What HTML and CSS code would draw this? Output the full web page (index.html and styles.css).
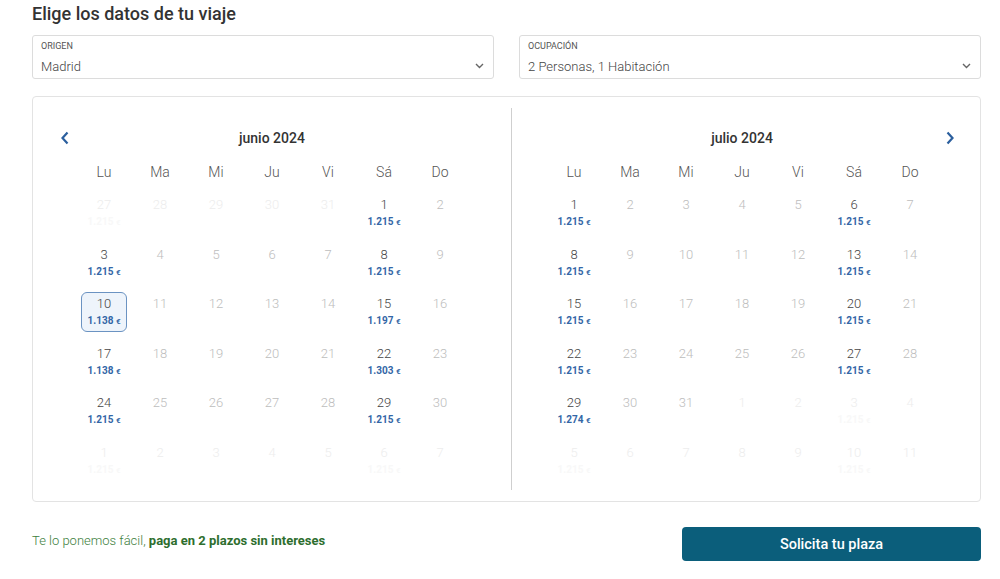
FILE: index.html
```html
<!DOCTYPE html>
<html lang="es">
<head>
  <meta charset="UTF-8">
  <title>Elige los datos de tu viaje</title>
  <link rel="stylesheet" href="styles.css">
</head>
<body>

  <div class="page">
    <h1>Elige los datos de tu viaje</h1>

    <div class="selects">
      <div class="select">
        <span class="select-label">ORIGEN</span>
        <span class="select-value">Madrid</span>
        <svg class="chevron" width="9" height="6" viewBox="0 0 9 6"><path d="M1 1l3.5 3.5L8 1" fill="none" stroke="#666" stroke-width="1.4"/></svg>
      </div>
      <div class="select">
        <span class="select-label">OCUPACIÓN</span>
        <span class="select-value">2 Personas, 1 Habitación</span>
        <svg class="chevron" width="9" height="6" viewBox="0 0 9 6"><path d="M1 1l3.5 3.5L8 1" fill="none" stroke="#666" stroke-width="1.4"/></svg>
      </div>
    </div>

    <div class="calendar">
      <div class="month month-left">
        <div class="month-head">
          <svg class="nav nav-prev" width="10" height="14" viewBox="0 0 10 14"><path d="M7.5 1.5L2.5 7l5 5.5" fill="none" stroke="#2b5f9e" stroke-width="2.2"/></svg>
          <span>junio 2024</span>
        </div>
        <div class="weekdays">
          <span>Lu</span><span>Ma</span><span>Mi</span><span>Ju</span><span>Vi</span><span>Sá</span><span>Do</span>
        </div>
        <div class="days" id="june"></div>
      </div>
      <div class="month month-right">
        <div class="month-head">
          <span>julio 2024</span>
          <svg class="nav nav-next" width="10" height="14" viewBox="0 0 10 14"><path d="M2.5 1.5L7.5 7l-5 5.5" fill="none" stroke="#2b5f9e" stroke-width="2.2"/></svg>
        </div>
        <div class="weekdays">
          <span>Lu</span><span>Ma</span><span>Mi</span><span>Ju</span><span>Vi</span><span>Sá</span><span>Do</span>
        </div>
        <div class="days" id="july"></div>
      </div>
    </div>

    <div class="footer">
      <p class="pay-note">Te lo ponemos fácil, <strong>paga en 2 plazos sin intereses</strong></p>
      <button class="btn">Solicita tu plaza</button>
    </div>
  </div>

  <script>
    // [day, price, type]  type: 'out' = other month
    const june = [
      [27, '1.215', 'out'], [28], [29], [30], [31], [1, '1.215'], [2],
      [3, '1.215'], [4], [5], [6], [7], [8, '1.215'], [9],
      [10, '1.138', 'sel'], [11], [12], [13], [14], [15, '1.197'], [16],
      [17, '1.138'], [18], [19], [20], [21], [22, '1.303'], [23],
      [24, '1.215'], [25], [26], [27], [28], [29, '1.215'], [30],
      [1, '1.215', 'out'], [2], [3], [4], [5], [6, '1.215', 'out'], [7]
    ];
    const july = [
      [1, '1.215'], [2], [3], [4], [5], [6, '1.215'], [7],
      [8, '1.215'], [9], [10], [11], [12], [13, '1.215'], [14],
      [15, '1.215'], [16], [17], [18], [19], [20, '1.215'], [21],
      [22, '1.215'], [23], [24], [25], [26], [27, '1.215'], [28],
      [29, '1.274'], [30], [31], [1], [2], [3, '1.215', 'out'], [4],
      [5, '1.215', 'out'], [6], [7], [8], [9], [10, '1.215', 'out'], [11]
    ];

    function fillMonth(id, days, outFrom, outTo) {
      const box = document.getElementById(id);
      days.forEach((d, i) => {
        const out = i < outFrom || i >= outTo;
        const cell = document.createElement('div');
        let cls = 'day';
        if (out) cls += ' out';
        else if (d[1]) cls += ' has-price';
        if (d[2] === 'sel') cls += ' selected';
        cell.className = 'day-cell';
        cell.innerHTML = `
          <div class="${cls}">
            <span class="num">${d[0]}</span>
            <span class="price">${d[1] ? d[1] + ' <small>€</small>' : '&nbsp;'}</span>
          </div>`;
        box.appendChild(cell);
      });
    }

    fillMonth('june', june, 5, 35);
    fillMonth('july', july, 0, 31);
  </script>

</body>
</html>
```

FILE: styles.css
```css
body {
  margin: 0;
  font-family: Roboto, "Liberation Sans", Arial, sans-serif;
  background: #fff;
  color: #444;
}

.page {
  width: 949px;
  margin-left: 32px;
}

h1 {
  margin: 0;
  padding-top: 2px;
  font-size: 18px;
  line-height: 24px;
  font-weight: 500;
  color: #333;
}

.selects {
  display: grid;
  grid-template-columns: 1fr 1fr;
  gap: 25px;
  margin-top: 9px;
}

.select {
  position: relative;
  height: 44px;
  box-sizing: border-box;
  border: 1px solid #dcdcdc;
  border-radius: 3px;
  padding: 4px 8px 0;
  display: flex;
  flex-direction: column;
}

.select-label {
  font-size: 9px;
  line-height: 12px;
  color: #555;
}

.select-value {
  margin-top: 7px;
  font-size: 13px;
  line-height: 16px;
  font-weight: 300;
  color: #444;
}

.chevron {
  position: absolute;
  right: 9px;
  top: 27px;
}

.calendar {
  margin-top: 17px;
  height: 406px;
  box-sizing: border-box;
  border: 1px solid #e3e3e3;
  border-radius: 4px;
  padding: 11px 0;
  display: flex;
}

.month {
  padding-top: 10px;
}

.month-left {
  width: 478px;
  border-right: 1px solid #cfcfcf;
}

.month-right {
  flex: 1;
  padding-right: 8px;
}

.month-head {
  position: relative;
  height: 40px;
  display: flex;
  align-items: center;
  justify-content: center;
  font-size: 14px;
  font-weight: 500;
  color: #333;
}

.nav {
  position: absolute;
  top: 13px;
}

.nav-prev {
  left: 27px;
}

.nav-next {
  right: 17px;
}

.weekdays,
.days {
  width: 392px;
  margin: 0 auto;
  display: grid;
  grid-template-columns: repeat(7, 56px);
}

.weekdays {
  margin-top: 2px;
  height: 24px;
  margin-bottom: 8px;
}

.weekdays span {
  text-align: center;
  font-size: 14px;
  line-height: 24px;
  font-weight: 300;
  color: #555;
}

.days {
  grid-auto-rows: 49.6px;
}

.day-cell {
  display: flex;
  justify-content: center;
  padding-top: 1px;
}

.day {
  width: 46px;
  height: 40px;
  box-sizing: border-box;
  padding-top: 3px;
  display: flex;
  flex-direction: column;
  align-items: center;
  border: 1px solid transparent;
  border-radius: 6px;
}

.num {
  font-size: 13px;
  line-height: 16px;
  font-weight: 300;
  color: #bdbdbd;
}

.price {
  margin-top: 2px;
  font-size: 10px;
  line-height: 14px;
  font-weight: 700;
  color: #3366a6;
}

.price small {
  font-size: 8px;
}

.has-price .num {
  color: #444;
}

.out .num {
  color: #ededed;
}

.out .price {
  color: #f8f8f8;
}

.selected {
  border-color: #6b93c2;
  background: #eef4fb;
}

.footer {
  margin-top: 25px;
  display: flex;
  align-items: flex-start;
  justify-content: space-between;
}

.pay-note {
  margin: 6px 0 0;
  font-size: 13px;
  line-height: 16px;
  font-weight: 300;
  color: #3d803d;
}

.pay-note strong {
  font-weight: 700;
  color: #2e6e2e;
}

.btn {
  width: 299px;
  height: 34px;
  border: 0;
  border-radius: 4px;
  background: #0b5e7b;
  color: #fff;
  font-family: Roboto, "Liberation Sans", Arial, sans-serif;
  font-size: 14.5px;
  font-weight: 500;
}
```
